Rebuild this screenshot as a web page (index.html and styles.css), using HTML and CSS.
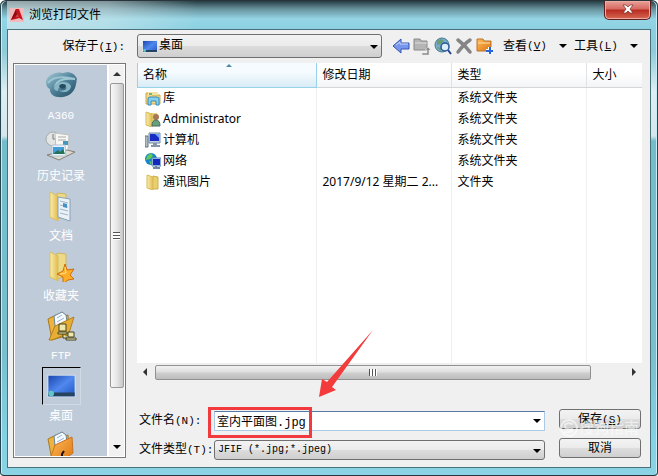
FILE: index.html
```html
<!DOCTYPE html>
<html lang="zh-CN">
<head>
<meta charset="utf-8">
<title>浏览打印文件</title>
<link rel="stylesheet" href="styles.css">
</head>
<body>
<svg class="defs" aria-hidden="true">
  <defs>
    <linearGradient id="blue" x1="0" y1="0" x2="1" y2="1"><stop offset="0" stop-color="#1d46b0"/><stop offset=".5" stop-color="#4f88ee"/><stop offset="1" stop-color="#2355c4"/></linearGradient>
    <linearGradient id="yellow" x1="0" y1="0" x2="1" y2="0"><stop offset="0" stop-color="#f9edac"/><stop offset="1" stop-color="#e2bc50"/></linearGradient>
    <linearGradient id="orange" x1="0" y1="0" x2="1" y2="1"><stop offset="0" stop-color="#ffbd5b"/><stop offset="1" stop-color="#dc7410"/></linearGradient>
    <linearGradient id="teal" x1="0" y1="0" x2="1" y2="1"><stop offset="0" stop-color="#a4cbd8"/><stop offset=".5" stop-color="#4e8198"/><stop offset="1" stop-color="#244c62"/></linearGradient>
    <symbol id="desktop" viewBox="0 0 32 26"><rect x="1" y="1" width="30" height="24" fill="#d9e4ec"/><rect x="2" y="2" width="28" height="22" fill="url(#blue)"/><path d="M2 20h28v4H2z" fill="#26445f"/><circle cx="5" cy="21" r="3" fill="#64c6c4"/></symbol>
    <symbol id="folder" viewBox="0 0 32 32"><path d="M12 3l9 1v22l-9 3z" fill="#edda86" stroke="#d2b65c"/><path d="M5 2l8 4v25l-8-4z" fill="url(#yellow)" stroke="#d9bf62"/></symbol>
    <symbol id="openfolder" viewBox="0 0 32 32"><path d="M3 9l8-4 4 2 8-2 1 20-17 5z" fill="#edb33e" stroke="#a9791c"/><path d="M9 6l8-4 4 3 2 14-12 6z" fill="#f7fbff" stroke="#688395"/><path d="M12 8l5-3M12 12l7-4M13 16l7-4" stroke="#8db4d4"/></symbol>
  </defs>
</svg>
<div class="window">
  <header class="titlebar">
    <svg class="logo" viewBox="0 0 14 14"><rect width="14" height="14" fill="#f0b9bb"/><path d="M1 12L6 1h3l4 11-4-2-3 1z" fill="#c5161d"/><path d="M6 1l1 6-6 5z" fill="#8e0c14"/><path d="M7 6l2 3H6z" fill="#c9474c"/></svg>
    <h1>浏览打印文件</h1>
    <button class="close" aria-label="关闭"><svg viewBox="0 0 12 10"><path d="M1 1h3l2 2 2-2h3L8 5l3 4H8L6 7 4 9H1l3-4z" fill="#fff" stroke="#703029" stroke-width=".7"/></svg></button>
  </header>
  <main class="client">
    <div class="top">
      <label class="lookin" for="lookin">保存于<span class="latin">(<u>I</u>):</span></label>
      <div class="drop location">
        <svg class="place"><use href="#desktop"/></svg>
        <select id="lookin"><option>桌面</option></select>
      </div>
      <div class="tools">
        <button aria-label="后退"><svg viewBox="0 0 18 18"><path d="M1 9l8-7v4h8v6H9v4z" fill="#7897ec" stroke="#3554b3"/><path d="M4 8l4-3v2h8" fill="none" stroke="#c4d3ff"/></svg></button>
        <button aria-label="上一级"><svg viewBox="0 0 18 18"><path d="M1 2h6l1 2h6v9H1z" fill="#b5b5b5" stroke="#888"/><path d="M2 6h12" stroke="#ddd"/><path d="M9 16h5v-3h-2l3-3 3 3h-2v5H9z" fill="#8b8b8b" stroke="#eee" stroke-width=".5"/></svg></button>
        <button aria-label="搜索网络"><svg viewBox="0 0 18 18"><circle cx="8" cy="8" r="7" fill="#78abc8" stroke="#467891"/><path d="M3 4l4-2 3 2-3 3-4 1zM3 10l4 1v3z" fill="#6b9d74"/><circle cx="11" cy="10" r="4" fill="#dceefa" stroke="#29589c" stroke-width="1.5"/><path d="M14 13l3 4" stroke="#24478d" stroke-width="2"/></svg></button>
        <button aria-label="删除"><svg viewBox="0 0 18 18"><path d="M3 3q7 5 12 12M15 3Q9 7 3 15" fill="none" stroke="#858585" stroke-width="3.5" stroke-linecap="round"/></svg></button>
        <button aria-label="新建文件夹"><svg viewBox="0 0 18 18"><path d="M1 2h6l1 2h7v10H1z" fill="url(#orange)" stroke="#b8742a"/><path d="M2 6h12" stroke="#ffe0ab"/><path d="M14 10v7M10 14h7" stroke="#fff" stroke-width="4"/><path d="M14 10v7M10 14h7" stroke="#2764d8" stroke-width="2"/></svg></button>
      </div>
      <button class="menu">查看<span class="latin">(<u>V</u>)</span><i class="down"></i></button>
      <button class="menu">工具<span class="latin">(<u>L</u>)</span><i class="down"></i></button>
    </div>
    <aside class="sidebar">
      <nav class="places">
        <button><svg viewBox="0 0 32 32"><path d="M1 12C2 5 11 1 18 3c7-2 12 1 14 6-1 1 0 3-1 5-1 9-9 14-18 13-5 0-9-5-8-8-3-1-4-4-4-7z" fill="url(#teal)"/><path d="M3 13C8 6 18 6 30 9c-10-1-18 1-20 7" fill="none" stroke="#9dc6d3" stroke-width="2"/><path d="M9 18c1-7 15-8 17-2 0 6-9 8-12 4 4 2 9-1 7-3-3-3-8 0-8 4-2 0-4-1-4-3z" fill="#89b5c5"/><path d="M14 16c2-3 7-2 7 0-1 3-5 4-7 0z" fill="#244b60"/></svg><span class="latin">A360</span></button>
        <button><svg viewBox="0 0 32 32"><circle cx="8" cy="9" r="7" fill="#e3e5e4" stroke="#a5aaad"/><path d="M8 4v5h4" fill="none" stroke="#777"/><path d="M10 3l14 2-1 16H11z" fill="#f7f7f5" stroke="#c0c2c0"/><path d="M13 7h8M13 10h8" stroke="#aaa"/><path d="M18 11h5v4h-5z" fill="#4298be"/><path d="M2 25l20-5 8 2-16 8z" fill="#dedcd2" stroke="#817f77"/><path d="M7 15h13l1 11H7z" fill="#e7f5ff" stroke="#b2c1cc"/><path d="M8 17h11v7H8z" fill="#439bd9"/><path d="M8 24l5-4 2 2 3-3 2 5z" fill="#267255"/></svg><span>历史记录</span></button>
        <button><svg viewBox="0 0 32 32"><use href="#folder"/><path d="M13 7l12 2v22l-12-4z" fill="#eaf1f7" stroke="#8aa2b5"/><path d="M15 11l8 2M15 15l8 2M15 19l8 2M15 23l8 2" stroke="#a0b5c9"/><path d="M18 13l4 1v4l-4-1z" fill="#4692c4"/></svg><span>文档</span></button>
        <button><svg viewBox="0 0 32 32"><use href="#folder"/><path d="M20 14l2 6 7-1-4 6 4 4-6 1-5 4v-7l-6-3 6-3z" fill="#ffad29" stroke="#cd6d0c"/><path d="M20 17l1 6-6 1" fill="none" stroke="#ffe28a"/></svg><span>收藏夹</span></button>
        <button><svg viewBox="0 0 32 32"><use href="#openfolder"/><path d="M4 30l6-14 19-9-5 16-17 7z" fill="#e8ad35" stroke="#b0811f"/><g fill="#eee8ad" stroke="#45421f"><path d="M14 14h7v7h-7zM23 22h6v5h-6z"/><path d="M13 22h9v2h-9zM21 28h10v2H21zM18 24v4h4"/></g></svg><span class="latin">FTP</span></button>
        <button class="selected"><svg viewBox="0 0 32 32"><use href="#desktop" y="3" width="32" height="26"/></svg><span>桌面</span></button>
        <button aria-label="Buzzsaw"><svg viewBox="0 0 32 32"><use href="#openfolder"/><path d="M5 29l5-14 17-8 1 16-12 9z" fill="url(#orange)" stroke="#c77222"/><path d="M17 32v-8l2-3" fill="none" stroke="#111" stroke-width="2"/></svg></button>
      </nav>
      <div class="vscroll"><i class="up"></i><div class="vthumb"><i class="grip"></i></div><i class="down"></i></div>
    </aside>
    <section class="files">
      <table>
        <colgroup><col class="c-name"><col class="c-date"><col class="c-type"><col></colgroup>
        <thead><tr><th class="sorted">名称<i class="sort"></i></th><th>修改日期</th><th>类型</th><th>大小</th></tr></thead>
        <tbody>
          <tr><td><span class="file"><svg viewBox="0 0 16 16"><path d="M1 3h5l1 2h8v9H1z" fill="#efd783" stroke="#c9a850"/><path d="M3 2h10v3H3z" fill="#f3e3a0"/><path d="M4 3h3v2H4z" fill="#6bb884"/><path d="M3 15V9q0-2 2-2h7q2 0 2 2v6h-3v-4H6v4z" fill="#87cff0" stroke="#368eb8"/></svg>库</span></td><td></td><td>系统文件夹</td><td></td></tr>
          <tr><td><span class="file"><svg viewBox="0 0 16 16"><path d="M5 2h7v12H5z" fill="#e7cf77"/><path d="M1 1l6 2v13l-6-2z" fill="url(#yellow)" stroke="#d7b95c"/><circle cx="11" cy="6" r="3" fill="#a57756"/><path d="M7 15q0-6 4-6t4 6z" fill="#67a178" stroke="#456b68"/></svg>Administrator</span></td><td></td><td>系统文件夹</td><td></td></tr>
          <tr><td><span class="file"><svg viewBox="0 0 16 16"><path d="M0 4h3v11H0z" fill="#b2bec1" stroke="#64757e"/><path d="M4 1h11v10H4z" fill="#c7d3de" stroke="#718ba6"/><path d="M5 2h9v7H5z" fill="#182cc5"/><path d="M10 2h4v4z" fill="#6fa1ff"/><path d="M8 11h4v2h3v2H6v-2h2z" fill="#8797ab"/></svg>计算机</span></td><td></td><td>系统文件夹</td><td></td></tr>
          <tr><td><span class="file"><svg viewBox="0 0 16 16"><circle cx="6" cy="6" r="6" fill="#1684ca"/><path d="M2 3l4-3 2 3-3 3-4 1zM4 8l3 1-1 3z" fill="#63ca54"/><path d="M7 5h9v8H7z" fill="#c2d6eb" stroke="#5c87b5"/><path d="M8 6h7v6H8z" fill="#1429bf"/><path d="M11 13v3M8 15h7" stroke="#71869f" stroke-width="2"/></svg>网络</span></td><td></td><td>系统文件夹</td><td></td></tr>
          <tr><td><span class="file"><svg viewBox="0 0 16 16"><path d="M8 2l5 1v12H7z" fill="#e9cf70" stroke="#d0ae4c"/><path d="M2 1l6 2v13l-6-2z" fill="url(#yellow)" stroke="#d9bb5c"/></svg>通讯图片</span></td><td>2017/9/12 星期二 2...</td><td>文件夹</td><td></td></tr>
          <tr class="rest"><td></td><td></td><td></td><td></td></tr>
        </tbody>
      </table>
      <div class="hscroll"><i class="left"></i><div class="htrack"><div class="hthumb"><i class="grip"></i></div></div><i class="right"></i></div>
    </section>
    <form class="form">
      <label for="name">文件名<span class="latin">(N):</span></label>
      <div class="drop editable">
        <input id="name" type="text" value="室内平面图.jpg"><i class="down"></i>
        <div class="highlight"></div>
        <svg class="arrow" viewBox="0 0 54 67"><path d="M0 67L3 49l5 3L54 0 13 57l4 3z" fill="#f33b3c"/></svg>
      </div>
      <button class="push" type="button">保存<span class="latin">(<u>S</u>)</span></button>
      <label for="type">文件类型<span class="latin">(T):</span></label>
      <div class="drop"><select id="type" class="filter"><option>JFIF (*.jpg;*.jpeg)</option></select></div>
      <button class="push" type="button">取消</button>
      <div class="watermark"><svg viewBox="0 0 18 18"><circle cx="9" cy="9" r="8"/><path d="M13 5Q5 3 5 7t7 3q2 4-8 3"/></svg>搜狗指南</div>
    </form>
  </main>
</div>
</body>
</html>
```
FILE: styles.css
```css
* { box-sizing: border-box; }
body { margin: 0; font: 12px/16px "Liberation Sans", "Noto Sans CJK SC", sans-serif; color: #000; }
button, input, select { font: inherit; color: inherit; margin: 0; }
.defs { position: absolute; width: 0; height: 0; }
.latin { font-family: "Liberation Mono", monospace; font-size: 11px; }
svg { display: block; flex: none; }

.window {
  min-height: 100vh; display: flex; flex-direction: column; padding: 0 7px 7px;
  border: 1px solid #28353b; border-width: 1px 0; border-radius: 6px 6px 4px 4px;
  background: linear-gradient(#263c43 0, #68929d 8px, #95d5e5 18px, #8acfe0 30px, #8fcbd9 50px, #dceff3 90px, #d5e6ed 135px, #73bdcb 140px, #79bfce 350px, #83d2e5 440px, #8bd3e4 100%);
  box-shadow: inset 1px 0 #26454f, inset 2px 0 #c9edf3, inset -1px 0 #26454f, inset -2px 0 #c9edf3;
}
.titlebar { height: 28px; display: flex; align-items: center; gap: 5px; padding: 0 0 0 3px; background: linear-gradient(90deg, #e0ecee99, #d4eaee80 100px, transparent 190px); }
.logo { width: 14px; height: 14px; }
h1 { flex: 1; margin: 0; font-size: 12px; font-weight: 400; }
.close { align-self: flex-start; width: 47px; height: 19px; padding: 3px 0 0; display: flex; justify-content: center; border: 1px solid #5b2020; border-top: 0; border-radius: 0 0 5px 5px; background: linear-gradient(#e7a19a, #d6685f 45%, #b92a20 50%, #d66953); box-shadow: inset 0 0 0 1px #f0aaa0; }
.close svg { width: 12px; height: 10px; }

.client { flex: 1; display: grid; grid-template-columns: 124px 1fr; grid-template-rows: 33px 1fr 86px; padding: 0 8px 0 5px; border: 1px solid #48717b; background: #f0f0f0; }
.top { grid-column: 1 / -1; display: flex; align-items: center; padding-bottom: 1px; }
.lookin { width: 124px; text-align: right; padding-right: 12px; }
.location { flex: 1; max-width: 245px; height: 24px; }
.drop { position: relative; }
.drop select { width: 100%; height: 100%; appearance: none; border: 1px solid #6f6f6f; border-radius: 3px; padding: 0 4px; outline: 0; background: linear-gradient(#f3f3f3, #ebebeb 48%, #dcdcdc 52%, #cfcfcf); }
.drop .filter { padding-left: 3px; font-family: "Liberation Mono", monospace; font-size: 10px; }
.location select { padding-left: 21px; padding-bottom: 2px; }
.drop::after, .down { content: ""; width: 0; height: 0; border: 4px solid transparent; border-top-color: #000; border-bottom: 0; }
.drop::after { position: absolute; right: 4px; top: calc(50% - 1px); pointer-events: none; }
.drop.editable::after { display: none; }
.place { position: absolute; left: 5px; top: 6px; width: 16px; height: 13px; }
.tools { display: flex; gap: 3px; margin: 0 9px 0 10px; }
.tools button { width: 18px; height: 18px; padding: 0; border: 0; background: none; }
.menu { display: flex; align-items: center; width: 71px; padding: 0; border: 0; background: none; white-space: nowrap; }
.menu .down { margin: 0 7px 0 auto; }
.menu:last-child { width: 66px; margin-right: -3px; }
.menu:last-child .down { margin-right: 2px; }

.sidebar { grid-row: 2 / 4; height: 395px; margin-right: 11px; display: flex; border: 1px solid #777; padding: 1px; background: #fff; }
.places { flex: 1; display: flex; flex-direction: column; align-items: center; overflow: hidden; padding-top: 5px; background: #bfcbd9; color: #fff; }
.places button { flex: none; display: flex; flex-direction: column; align-items: center; gap: 6px; height: 60px; padding: 0; border: 0; background: none; }
.places svg { width: 32px; height: 32px; }
.places .selected svg { width: 39px; height: 38px; padding: 3px; margin: -3px 0; border: 1px solid #d0dae4; border-left-color: #000; border-top-color: #000; }
.vscroll { width: 17px; display: flex; flex-direction: column; align-items: center; padding: 7px 0; background: #f1f1f1; border-left: 2px solid #fff; }
.up, .left, .right { width: 0; height: 0; border: 4px solid transparent; }
.up { border-bottom-color: #333; border-top: 0; }
.left { border-right-color: #333; border-left: 0; }
.right { border-left-color: #333; border-right: 0; }
.vthumb { width: 14px; height: 305px; margin: 7px 0 auto; border: 1px solid #999; border-radius: 2px; display: flex; align-items: center; justify-content: center; background: linear-gradient(90deg, #f7f7f7, #e5e5e5 50%, #c7c7c7); }
.vthumb .grip { width: 7px; height: 8px; background: repeating-linear-gradient(#555 0 1px, #fff 1px 3px); }

.files { display: flex; flex-direction: column; background: #fff; font-family: "Noto Sans", "Noto Sans CJK SC", sans-serif; }
table { flex: 1; width: 100%; table-layout: fixed; border-collapse: collapse; }
.c-name { width: 179px; }
.c-date, .c-type { width: 135px; }
th { position: relative; height: 24px; padding: 1px 6px 0; text-align: left; font-weight: 400; border-right: 1px solid #dfe3e7; border-bottom: 1px solid #d5d5d5; background: linear-gradient(#fff 40%, #f3f4f6); }
th.sorted { border-color: #96d3ea; background: linear-gradient(#f5fbfe 40%, #d8ecf6); box-shadow: inset 1px 0 #96d3ea; }
th:last-child, td:last-child { border-right: 0; }
.sort { position: absolute; left: 50%; top: 1px; border: 3px solid transparent; border-bottom-color: #4c8ba1; border-top: 0; }
td { height: 21px; padding: 0 6px; border-right: 1px solid #eef1f4; white-space: nowrap; overflow: hidden; }
td:first-child { padding-left: 8px; }
.file { display: flex; align-items: center; gap: 2px; }
.file svg { width: 16px; height: 16px; }
.rest td { height: auto; }
.hscroll { height: 18px; display: flex; align-items: center; gap: 8px; padding: 0 6px; background: #f0f0f0; }
.htrack { flex: 1; }
.hthumb { width: 93%; height: 15px; border: 1px solid #919191; border-radius: 2px; display: flex; align-items: center; justify-content: center; background: linear-gradient(#f2f2f2, #dedede 48%, #cfcfcf 52%, #bdbdbd); }
.hthumb .grip { width: 8px; height: 7px; background: repeating-linear-gradient(90deg, #555 0 1px, #fff 1px 3px); }

.form { position: relative; display: grid; grid-template-columns: 74px 1fr 82px; grid-template-rows: 22px 22px; row-gap: 7px; column-gap: 14px; align-content: start; align-items: end; padding: 28px 1px 0 2px; }
.form label { white-space: nowrap; line-height: 20px; }
.form .drop { height: 20px; margin-left: -13px; }
.editable { display: flex; align-items: center; border: 1px solid #abcae6; border-top-color: #567aa7; background: #fff; }
.editable input { flex: 1; min-width: 0; height: 18px; padding: 0 2px; border: 0; outline: 0; background: none; font-family: "Liberation Mono", "Noto Sans CJK SC", monospace; }
.editable .down { margin-right: 3px; }
.push { align-self: start; height: 20px; padding: 0; border: 1px solid #707070; border-radius: 3px; line-height: 16px; background: linear-gradient(#f3f3f3, #ebebeb 48%, #dddddd 52%, #cfcfcf); }
.highlight { position: absolute; left: -7px; top: -5px; width: 104px; height: 31px; border: 3px solid #f23a3e; pointer-events: none; }
.arrow { position: absolute; left: 104px; top: -82px; width: 54px; height: 67px; pointer-events: none; }
.watermark { position: absolute; right: 3px; top: 38px; display: flex; align-items: center; gap: 1px; font-size: 15px; line-height: 18px; color: #fff; opacity: .6; pointer-events: none; }
.watermark svg { width: 18px; height: 18px; fill: none; stroke: #fff; stroke-width: 2; }
```
